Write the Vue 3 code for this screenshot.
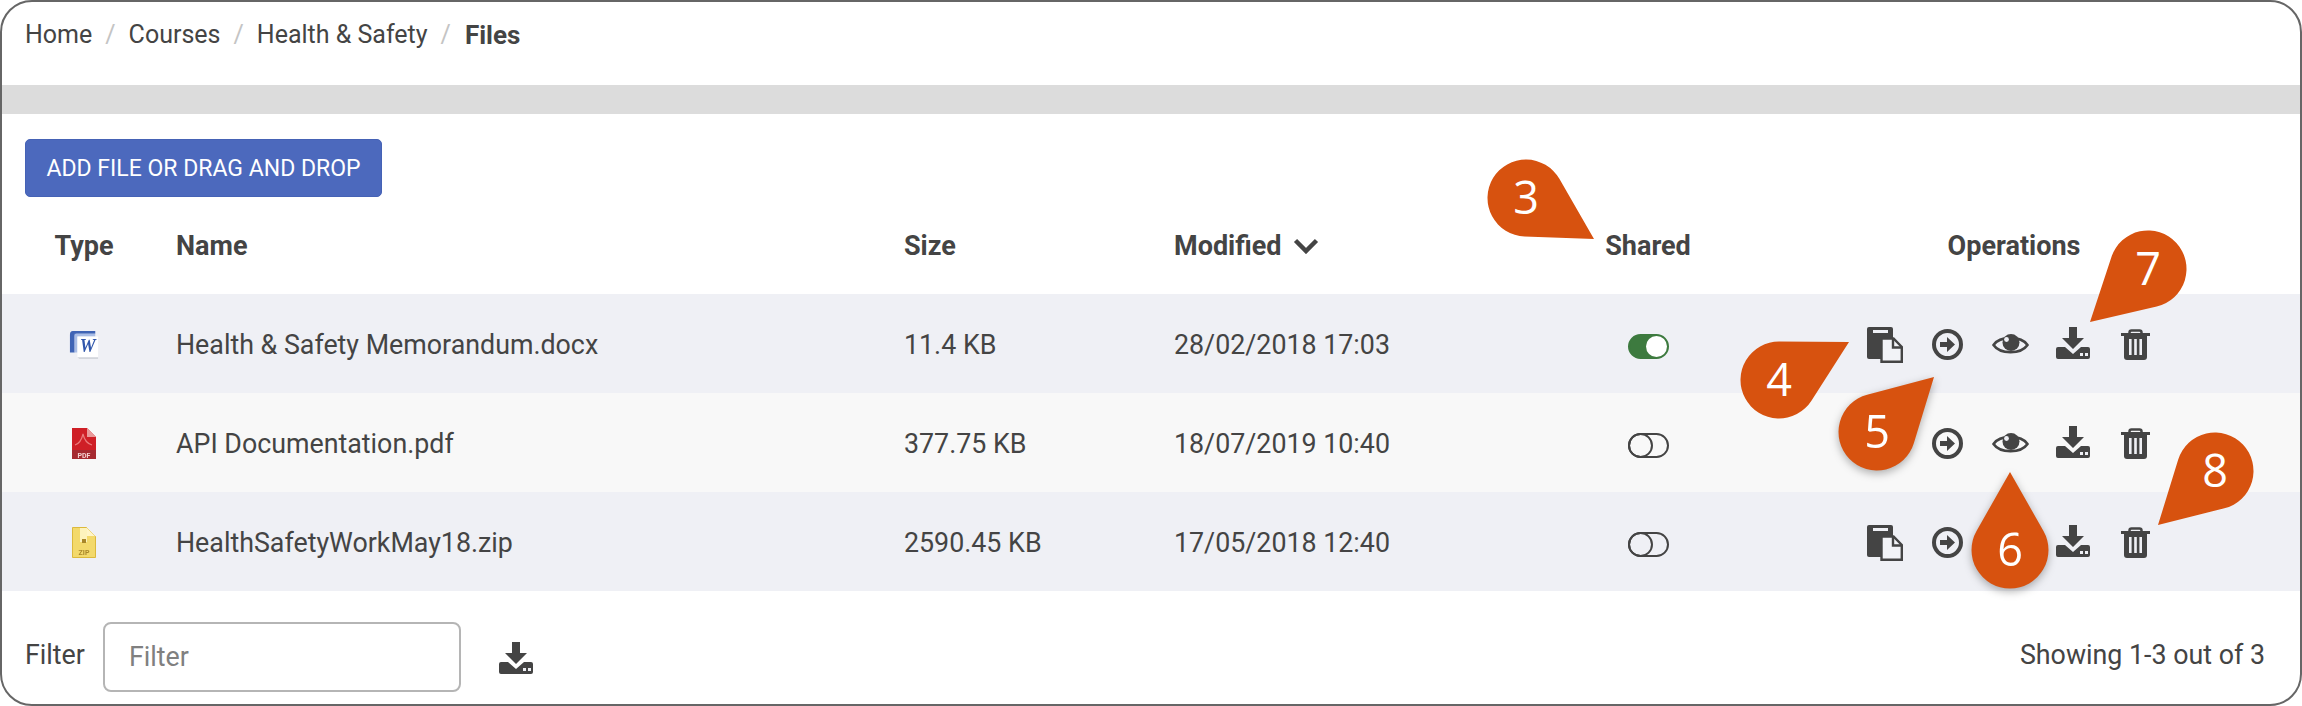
<script setup>
const crumbs = ['Home', 'Courses', 'Health & Safety']

const files = [
  { id: 1, type: 'word', name: 'Health & Safety Memorandum.docx', size: '11.4 KB', modified: '28/02/2018 17:03', shared: true, copy: true },
  { id: 2, type: 'pdf', name: 'API Documentation.pdf', size: '377.75 KB', modified: '18/07/2019 10:40', shared: false, copy: false },
  { id: 3, type: 'zip', name: 'HealthSafetyWorkMay18.zip', size: '2590.45 KB', modified: '17/05/2018 12:40', shared: false, copy: true }
]

const ops = [
  { id: 'copy', w: 36, h: 36 },
  { id: 'move', w: 31, h: 31 },
  { id: 'eye', w: 37, h: 25 },
  { id: 'download', w: 34, h: 32 },
  { id: 'trash', w: 29, h: 31 }
]

// callout pins: circle centre, radius, tip
const pins = [
  { n: 3, cx: 1526, cy: 198, tx: 1594, ty: 239 },
  { n: 4, cx: 1779, cy: 380, tx: 1849, ty: 342 },
  { n: 5, cx: 1877, cy: 432, tx: 1934, ty: 377, shadow: true },
  { n: 6, cx: 2010, cy: 550, tx: 2010, ty: 472, shadow: true },
  { n: 7, cx: 2148, cy: 269, tx: 2090, ty: 322 },
  { n: 8, cx: 2215, cy: 471, tx: 2158, ty: 525 }
]

const R = 38.5

function pinPath(p) {
  const dx = p.cx - p.tx
  const dy = p.cy - p.ty
  const d = Math.hypot(dx, dy)
  const base = Math.atan2(-dy, -dx)
  const a = Math.acos(R / d)
  const x1 = p.cx + R * Math.cos(base + a)
  const y1 = p.cy + R * Math.sin(base + a)
  const x2 = p.cx + R * Math.cos(base - a)
  const y2 = p.cy + R * Math.sin(base - a)
  return `M${p.tx} ${p.ty}L${x1} ${y1}A${R} ${R} 0 1 1 ${x2} ${y2}Z`
}
</script>

<template>
  <div class="screen">
    <svg class="sprite" width="0" height="0">
      <symbol id="i-copy" viewBox="0 0 36 36">
        <path fill="#444" d="M2 0h22a2 2 0 0 1 2 2v30H2a2 2 0 0 1-2-2V2a2 2 0 0 1 2-2z" />
        <rect x="6" y="3" width="15" height="3" fill="#eff0f5" />
        <path fill="#f2f3f7" stroke="#444" stroke-width="2.4" d="M14.5 11.5h12l8.3 8.5v14.8H14.5z" />
        <path fill="none" stroke="#444" stroke-width="2.4" d="M26 11v9.5h9" />
      </symbol>
      <symbol id="i-move" viewBox="0 0 31 31">
        <circle cx="15.5" cy="15.5" r="13.5" fill="none" stroke="#444" stroke-width="4" />
        <path fill="#444" d="M8 13h7V8l8 7.5-8 7.500v-5H8z" />
      </symbol>
      <symbol id="i-eye" viewBox="0 0 37 25">
        <path fill="none" stroke="#444" stroke-width="2.6" d="M1.5 13C8 3.5 29 3.5 35.5 13 29 22.500 8 22.500 1.500 13z" />
        <circle cx="19" cy="10.500" r="8.500" fill="#444" />
        <circle cx="14.500" cy="7.500" r="2.400" fill="#eff0f5" />
      </symbol>
      <symbol id="i-download" viewBox="0 0 34 32">
        <path fill="#444" d="M13 0h8v11h7L17 22 6 11h7z" />
        <path fill="#444" d="M2 20h7l8 7 8-7h7a2 2 0 0 1 2 2v8a2 2 0 0 1-2 2H2a2 2 0 0 1-2-2v-8a2 2 0 0 1 2-2z" />
        <rect x="24" y="26" width="3" height="3" fill="#eff0f5" />
        <rect x="29" y="26" width="3" height="3" fill="#eff0f5" />
      </symbol>
      <symbol id="i-trash" viewBox="0 0 29 31">
        <path fill="none" stroke="#444" stroke-width="2.500" d="M8.500 5V3.500a2 2 0 0 1 2-2h8a2 2 0 0 1 2 2V5" />
        <rect y="4" width="29" height="3" fill="#444" />
        <path fill="#444" d="M3 6h23v22a3 3 0 0 1-3 3H6a3 3 0 0 1-3-3z" />
        <rect x="8" y="10" width="2.600" height="16" fill="#eff0f5" />
        <rect x="13.200" y="10" width="2.600" height="16" fill="#eff0f5" />
        <rect x="18.400" y="10" width="2.600" height="16" fill="#eff0f5" />
      </symbol>
    </svg>

    <nav class="crumbs">
      <template v-for="c in crumbs" :key="c">
        <span>{{ c }}</span>
        <span class="sep">/</span>
      </template>
      <b>Files</b>
    </nav>

    <div class="band"></div>

    <div class="toolbar">
      <button class="btn-add">ADD FILE OR DRAG AND DROP</button>
    </div>

    <div class="row head">
      <div class="center first">Type</div>
      <div>Name</div>
      <div>Size</div>
      <div class="modified">
        Modified
        <svg width="26" height="16" viewBox="0 0 26 16"><path d="M2.500 2.500 13 13 23.500 2.500" fill="none" stroke="#444" stroke-width="4.500" /></svg>
      </div>
      <div class="center">Shared</div>
      <div class="center">Operations</div>
    </div>

    <div v-for="f in files" :key="f.id" class="row item">
      <div class="center first file-icon">
        <svg v-if="f.type === 'word'" width="30" height="30" viewBox="0 0 32 32">
          <path fill="#3f64b5" d="M4 1h24v3H8q-2 0-2 2v18H1V5q0-4 3-4z" />
          <path fill="#a9bde6" d="M6 4h22v3H9v17H6z" />
          <rect x="9" y="7" width="22" height="22" fill="#fff" />
          <path fill="#d3d6dc" d="M9 29h22v2H11z" />
          <text x="20" y="23" class="word-w">W</text>
        </svg>
        <svg v-else-if="f.type === 'pdf'" width="24" height="31" viewBox="0 0 24 31">
          <path fill="#cf1f26" d="M0 0h15l9 9v22H0z" />
          <path fill="#e99a9a" d="M15 0v9h9z" />
          <path fill="none" stroke="#eb7c7c" stroke-width="1.200" d="M3 17q6-2 8-11 2 9 9 11" />
          <rect y="22" width="24" height="9" fill="#a52a30" />
          <text x="12" y="29.500" class="tiny">PDF</text>
        </svg>
        <svg v-else width="24" height="31" viewBox="0 0 24 31">
          <path fill="#f3d96b" stroke="#dcb93c" stroke-width="1" d="M.5.500h14l9 9v21H.5z" />
          <path fill="#fff5c8" d="M15 1v8h8z" />
          <rect x="8" y="1" width="7" height="14" fill="#fdf3bd" />
          <rect x="10" y="12" width="4" height="4" fill="#a8862a" />
          <text x="12" y="28" class="tiny zip">ZIP</text>
        </svg>
      </div>
      <div>{{ f.name }}</div>
      <div>{{ f.size }}</div>
      <div>{{ f.modified }}</div>
      <div class="center">
        <span class="toggle" :class="{ on: f.shared }"><i></i></span>
      </div>
      <div class="ops">
        <span v-for="o in ops" :key="o.id" class="op" :class="`op-${o.id}`">
          <svg v-if="o.id !== 'copy' || f.copy" :width="o.w" :height="o.h"><use :href="`#i-${o.id}`" /></svg>
        </span>
      </div>
    </div>

    <div class="footer">
      <label class="filter-label">Filter</label>
      <input class="filter-input" placeholder="Filter" />
      <svg class="export" width="34" height="32"><use href="#i-download" /></svg>
      <span class="count">Showing 1-3 out of 3</span>
    </div>

    <svg class="pins" width="2302" height="706" viewBox="0 0 2302 706">
      <g v-for="p in pins" :key="p.n" :class="{ shadow: p.shadow }">
        <path :d="pinPath(p)" fill="#d7520f" />
        <text :x="p.cx" :y="p.cy + 16" class="pin-num">{{ p.n }}</text>
      </g>
    </svg>
  </div>
</template>

<style>
html, body {
  margin: 0;
  background: #fff;
}
</style>

<style scoped>
.screen {
  position: relative;
  width: 2302px;
  height: 706px;
  box-sizing: border-box;
  border: 2px solid #666;
  border-radius: 32px;
  overflow: hidden;
  background: #fff;
  color: #444;
  font-family: Roboto, "Liberation Sans", sans-serif;
  font-size: 26.800px;
  display: flex;
  flex-direction: column;
}

.sprite {
  position: absolute;
}

.crumbs {
  height: 83px;
  flex: none;
  box-sizing: border-box;
  padding: 15px 0 0 23px;
  line-height: 36px;
  font-size: 25px;
  display: flex;
  color: #444;
}

.crumbs .sep {
  color: #c4c4c4;
  margin: 0 13px;
}

.crumbs b {
  font-weight: 700;
  font-size: 26px;
  margin-left: 1px;
}

.band {
  height: 29px;
  flex: none;
  background: #dcdcdc;
}

.toolbar {
  flex: none;
  padding: 25px 0 0 23px;
}

.btn-add {
  width: 357px;
  height: 58px;
  display: block;
  border: 1px solid #4562b5;
  border-radius: 5px;
  background: #4c69bd;
  color: #fff;
  font-family: inherit;
  font-size: 23px;
  padding: 0;
}

.row {
  display: grid;
  grid-template-columns: 174px 728px 270px 300px 348px 384px 1fr;
  align-items: center;
}

.first {
  padding-right: 10px;
}

.head {
  height: 97px;
  flex: none;
  font-size: 27px;
  font-weight: 700;
}

.item {
  height: 99px;
  flex: none;
  background: #f8f8f8;
  padding-top: 2px;
  box-sizing: border-box;
}

.item:nth-of-type(even) {
  background: #eff0f5;
}

.center {
  text-align: center;
}

.modified {
  display: flex;
  align-items: center;
  gap: 12px;
}

.file-icon svg {
  display: block;
  margin: 0 auto;
  filter: blur(0.5px);
}

.word-w {
  font-family: "Liberation Serif", serif;
  font-size: 19px;
  font-weight: 700;
  font-style: italic;
  fill: #3157ab;
  text-anchor: middle;
}

.tiny {
  font-size: 7px;
  font-weight: 700;
  fill: #f4d0d0;
  text-anchor: middle;
}

.tiny.zip {
  fill: #a8862a;
}

.toggle {
  display: inline-block;
  vertical-align: middle;
  box-sizing: border-box;
  width: 41px;
  height: 25px;
  border: 2px solid #444;
  border-radius: 13px;
  position: relative;
}

.toggle i {
  position: absolute;
  left: -2px;
  top: -2px;
  width: 25px;
  height: 25px;
  box-sizing: border-box;
  border: 2px solid #444;
  border-radius: 50%;
}

.toggle.on {
  background: #3d7a3f;
  border-color: #3d7a3f;
}

.toggle.on i {
  left: auto;
  right: 0;
  top: 0;
  width: 21px;
  height: 21px;
  border: 0;
  background: #fff;
}

.ops {
  display: flex;
  justify-content: center;
  padding: 0 8px 0 0;
}

.op {
  width: 62.500px;
  display: flex;
  justify-content: center;
  align-items: center;
}

.op-download {
  padding-bottom: 4px;
}

.footer {
  flex: 1;
  position: relative;
  display: flex;
  align-items: center;
  padding: 18px 35px 0 23px;
}

.filter-label {
  width: 78px;
  margin-top: -4px;
}

.filter-input {
  width: 358px;
  height: 70px;
  box-sizing: border-box;
  border: 2px solid #b5b5b5;
  border-radius: 8px;
  padding: 0 24px;
  font-family: inherit;
  font-size: 26.800px;
  color: #444;
  outline: none;
}

.filter-input::placeholder {
  color: #808080;
  opacity: 1;
}

.export {
  margin: 3px 0 0 38px;
}

.count {
  margin-left: auto;
  margin-top: -4px;
}

.pins {
  position: absolute;
  left: -2px;
  top: -2px;
  pointer-events: none;
}

.pins .shadow {
  filter: drop-shadow(0 3px 4px rgba(0, 0, 0, 0.3));
}

.pin-num {
  font-family: "Open Sans", sans-serif;
  font-size: 45px;
  fill: #fff;
  text-anchor: middle;
}
</style>
